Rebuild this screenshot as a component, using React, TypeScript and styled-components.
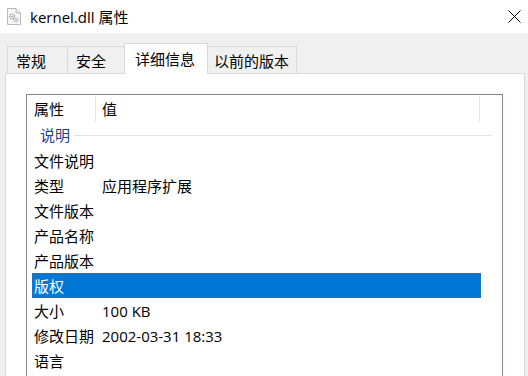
import React from "react";
import styled, { createGlobalStyle } from "styled-components";

const Global = createGlobalStyle`
  html, body { margin: 0; padding: 0; background: #f0f0f0; }
  body { font-family: "Open Sans", "Noto Sans CJK SC", sans-serif; color: #000; }
`;

const Window = styled.div`
  width: 528px;
  height: 376px;
  overflow: hidden;
  background: #f0f0f0;
  display: flex;
  flex-direction: column;
`;

const TitleBar = styled.div`
  height: 33px;
  flex-shrink: 0;
  background: #fff;
  display: flex;
  align-items: center;
  padding: 0 7px 0 7px;
`;

const TitleText = styled.span`
  margin-left: 9px;
  font-size: 15px;
  line-height: 20px;
  color: #000;
`;

const CloseBox = styled.div`
  margin-left: auto;
  width: 13px;
  height: 13px;
  display: flex;
`;

const Body = styled.div`
  flex: 1;
  display: flex;
  flex-direction: column;
  padding: 10px 3px 0 5px;
`;

const TabStrip = styled.div`
  display: flex;
  align-items: flex-end;
  height: 30px;
  padding-left: 2px;
`;

const Tab = styled.div<{ $w: number; $active?: boolean; $ml?: number }>`
  box-sizing: border-box;
  width: ${(p) => p.$w}px;
  height: ${(p) => (p.$active ? 31 : 27)}px;
  margin-left: ${(p) => p.$ml ?? 0}px;
  margin-right: ${(p) => (p.$active ? -2 : 0)}px;
  margin-bottom: ${(p) => (p.$active ? -1 : 0)}px;
  position: relative;
  z-index: ${(p) => (p.$active ? 2 : 1)};
  background: ${(p) => (p.$active ? "#fff" : "#f0f0f0")};
  border: 1px solid #d9d9d9;
  border-bottom: none;
  padding-left: ${(p) => (p.$active ? 10 : 8)}px;
  padding-top: ${(p) => (p.$active ? 5 : 4)}px;
  font-size: 15px;
  line-height: 20px;
  white-space: nowrap;
`;

const Panel = styled.div`
  flex: 1;
  background: #fff;
  border: 1px solid #d9d9d9;
  padding: 20px 21px 0 20px;
`;

const ListView = styled.div`
  height: 400px;
  border: 1px solid #828790;
  background: #fff;
`;

const HeaderRow = styled.div`
  display: flex;
  height: 27px;
`;

const HeaderCell = styled.div<{ $w: number; $pl: number }>`
  box-sizing: border-box;
  width: ${(p) => p.$w}px;
  padding-left: ${(p) => p.$pl}px;
  padding-top: 4px;
  font-size: 15px;
  line-height: 20px;
  position: relative;
  &::after {
    content: "";
    position: absolute;
    right: 0;
    top: 1px;
    bottom: 0;
    width: 1px;
    background: #e5e5e5;
  }
`;

const GroupHeader = styled.div`
  display: flex;
  align-items: center;
  height: 26px;
  padding: 0 10px 0 13px;
`;

const GroupTitle = styled.span`
  font-size: 15px;
  line-height: 20px;
  color: #1e3c96;
`;

const GroupLine = styled.div`
  flex: 1;
  height: 1px;
  margin-left: 4px;
  background: #dfe4ea;
`;

const Row = styled.div<{ $selected?: boolean }>`
  box-sizing: border-box;
  display: flex;
  align-items: center;
  width: 449px;
  height: 25px;
  margin-left: 5px;
  padding-left: 1px;
  font-size: 15px;
  line-height: 20px;
  background: ${(p) => (p.$selected ? "#0078d7" : "transparent")};
  color: ${(p) => (p.$selected ? "#fff" : "#000")};
  border: 1px ${(p) => (p.$selected ? "dotted #4a6e94" : "solid transparent")};
`;

const NameCell = styled.span`
  width: 68px;
  flex-shrink: 0;
  white-space: nowrap;
`;

const ValueCell = styled.span`
  white-space: nowrap;
`;

const FileIcon = () => (
  <svg width="14" height="17" viewBox="0 0 14 17">
    <path d="M0.5 0.5 H9 L13.5 5 V16.5 H0.5 Z" fill="#f7f7f7" stroke="#b9b9b9" />
    <path d="M9 0.5 V5 H13.5" fill="#e6e6e6" stroke="#b9b9b9" />
    <circle cx="5" cy="8.5" r="2.4" fill="none" stroke="#9a9a9a" strokeWidth="1.4" strokeDasharray="1.2 0.8" />
    <circle cx="5" cy="8.5" r="0.8" fill="#9a9a9a" />
    <circle cx="9" cy="12" r="2" fill="none" stroke="#a8a8a8" strokeWidth="1.3" strokeDasharray="1 0.8" />
    <circle cx="9" cy="12" r="0.7" fill="#a8a8a8" />
  </svg>
);

const CloseIcon = () => (
  <svg width="13" height="13" viewBox="0 0 13 13">
    <path d="M0.5 0.5 L12.5 12.5 M12.5 0.5 L0.5 12.5" stroke="#000" strokeWidth="1" />
  </svg>
);

const rows: { name: string; value?: string; selected?: boolean }[] = [
  { name: "文件说明" },
  { name: "类型", value: "应用程序扩展" },
  { name: "文件版本" },
  { name: "产品名称" },
  { name: "产品版本" },
  { name: "版权", selected: true },
  { name: "大小", value: "100 KB" },
  { name: "修改日期", value: "2002-03-31 18:33" },
  { name: "语言" },
];

export default function App() {
  return (
    <>
      <Global />
      <Window>
        <TitleBar>
          <FileIcon />
          <TitleText>kernel.dll 属性</TitleText>
          <CloseBox>
            <CloseIcon />
          </CloseBox>
        </TitleBar>
        <Body>
          <TabStrip>
            <Tab $w={61}>常规</Tab>
            <Tab $w={60} $ml={-1}>安全</Tab>
            <Tab $w={84} $ml={-3} $active>详细信息</Tab>
            <Tab $w={92} $ml={-1}>以前的版本</Tab>
          </TabStrip>
          <Panel>
            <ListView>
              <HeaderRow>
                <HeaderCell $w={69} $pl={7}>属性</HeaderCell>
                <HeaderCell $w={384} $pl={6}>值</HeaderCell>
              </HeaderRow>
              <GroupHeader>
                <GroupTitle>说明</GroupTitle>
                <GroupLine />
              </GroupHeader>
              {rows.map((r) => (
                <Row key={r.name} $selected={r.selected}>
                  <NameCell>{r.name}</NameCell>
                  <ValueCell>{r.value ?? ""}</ValueCell>
                </Row>
              ))}
            </ListView>
          </Panel>
        </Body>
      </Window>
    </>
  );
}
